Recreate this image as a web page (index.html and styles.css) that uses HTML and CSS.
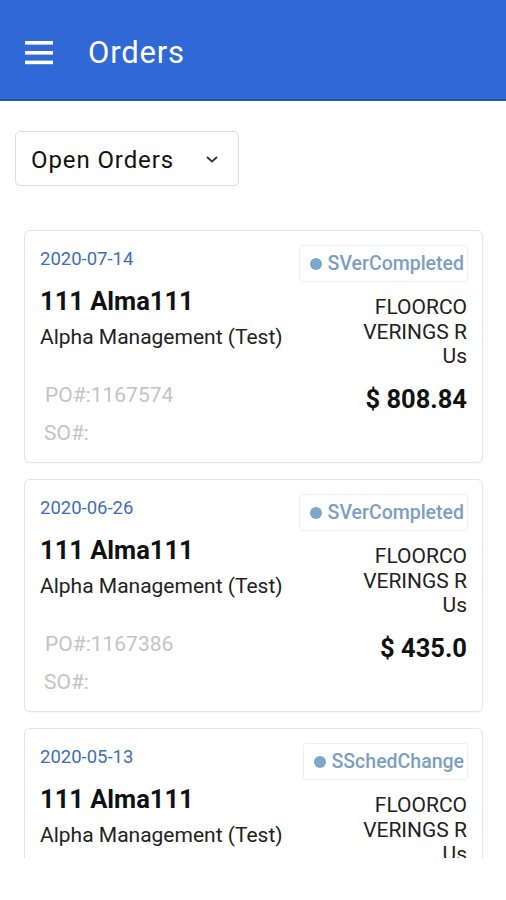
FILE: index.html
```html
<!DOCTYPE html>
<html lang="en">
<head>
  <meta charset="UTF-8" />
  <title>Orders</title>
  <meta name="viewport" content="width=device-width, initial-scale=1.0" />
  <link rel="stylesheet" href="styles.css">
</head>
<body>

  <div class="header">
    <svg class="menu-icon" width="28" height="24" viewBox="0 0 28 24">
      <rect x="0" y="0" width="28" height="3.6" fill="#fff" />
      <rect x="0" y="10" width="28" height="3.6" fill="#fff" />
      <rect x="0" y="19.6" width="28" height="3.6" fill="#fff" />
    </svg>
    <h1>Orders</h1>
  </div>

  <div class="filter">
    <div class="select-box">
      <span>Open Orders</span>
      <svg class="chevron" width="12" height="7" viewBox="0 0 12 7">
        <polyline points="1,1 6,5.5 11,1" fill="none" stroke="#333" stroke-width="1.8" />
      </svg>
    </div>
  </div>

  <!-- Orders list -->
  <div class="order-list">

    <div class="order-card">
      <div class="card-top">
        <span class="order-date">2020-07-14</span>
        <span class="status"><i class="dot"></i>SVerCompleted</span>
      </div>
      <div class="card-body">
        <div class="col-left">
          <div class="job-name">111 Alma111</div>
          <div class="client">Alpha Management (Test)</div>
          <div class="ref po">PO#:1167574</div>
          <div class="ref">SO#:</div>
        </div>
        <div class="col-right">
          <div class="vendor">FLOORCO<br>VERINGS R<br>Us</div>
          <div class="amount">$ 808.84</div>
        </div>
      </div>
    </div>

    <div class="order-card">
      <div class="card-top">
        <span class="order-date">2020-06-26</span>
        <span class="status"><i class="dot"></i>SVerCompleted</span>
      </div>
      <div class="card-body">
        <div class="col-left">
          <div class="job-name">111 Alma111</div>
          <div class="client">Alpha Management (Test)</div>
          <div class="ref po">PO#:1167386</div>
          <div class="ref">SO#:</div>
        </div>
        <div class="col-right">
          <div class="vendor">FLOORCO<br>VERINGS R<br>Us</div>
          <div class="amount">$ 435.0</div>
        </div>
      </div>
    </div>

    <div class="order-card">
      <div class="card-top">
        <span class="order-date">2020-05-13</span>
        <span class="status"><i class="dot"></i>SSchedChange</span>
      </div>
      <div class="card-body">
        <div class="col-left">
          <div class="job-name">111 Alma111</div>
          <div class="client">Alpha Management (Test)</div>
          <div class="ref po">PO#:1166120</div>
          <div class="ref">SO#:</div>
        </div>
        <div class="col-right">
          <div class="vendor">FLOORCO<br>VERINGS R<br>Us</div>
          <div class="amount">$ 120.0</div>
        </div>
      </div>
    </div>

  </div>

</body>
</html>
```

FILE: styles.css
```css
body {
  font-family: Roboto, "Noto Sans", sans-serif;
  background: #fff;
  margin: 0;
  padding: 0;
  color: #111;
}
.header {
  background: #3069d5;
  border-bottom: 2px solid #1f55b4;
  display: flex;
  align-items: center;
  padding: 6px 0 0 25px;
  box-sizing: border-box;
  height: 101px;
}
.header h1 {
  margin: 0 0 0 35px;
  color: #fff;
  font-size: 31px;
  font-weight: 400;
  letter-spacing: 0.8px;
}
.filter {
  padding: 30px 15px 0;
}
.select-box {
  width: 224px;
  height: 55px;
  box-sizing: border-box;
  border: 1px solid #dedede;
  border-radius: 5px;
  display: flex;
  align-items: center;
  justify-content: space-between;
  padding: 2px 20px 0 15px;
  font-size: 24px;
  letter-spacing: 0.9px;
  color: #111;
}
.chevron {
  margin-top: 0;
}
/* list of order cards */
.order-list {
  margin-top: 28px;
  height: 644px;
  overflow: hidden;
  padding: 16px 23px 0 24px;
  box-sizing: border-box;
}
.order-card {
  border: 1px solid #e4e4e4;
  border-radius: 6px;
  box-shadow: 0 1px 2px rgba(0,0,0,0.04);
  padding: 15px;
  margin-bottom: 16px;
  background: #fff;
}
.card-top {
  display: flex;
  justify-content: space-between;
  align-items: flex-start;
  height: 36px;
  margin-bottom: 2px;
}
.order-date {
  font-size: 18.5px;
  line-height: 26px;
  color: #3d6fb6;
}
.status {
  display: flex;
  align-items: center;
  height: 37px;
  margin-top: -1px;
  box-sizing: border-box;
  border: 1px solid #eeeff1;
  border-radius: 3px;
  padding: 0 3px 0 10px;
  font-size: 19.5px;
  font-weight: 500;
  color: #7d9fc2;
  margin-right: -1px;
}
.dot {
  width: 12px;
  height: 12px;
  border-radius: 50%;
  background: #7ea7cc;
  margin-right: 6px;
}
.card-body {
  display: flex;
  justify-content: space-between;
}
.job-name {
  font-size: 25.5px;
  font-weight: 700;
  line-height: 32px;
  margin-top: 1px;
}
.client {
  font-size: 21px;
  line-height: 28px;
  margin-top: 6px;
  color: #222;
}
.ref {
  font-size: 21px;
  line-height: 28px;
  color: #c4c4c4;
  padding-left: 4px;
  margin-top: 10px;
}
.ref.po {
  margin-top: 30px;
  padding-left: 5px;
}
.col-right {
  text-align: right;
  margin-top: 11px;
}
.vendor {
  font-size: 21px;
  line-height: 24.5px;
  color: #222;
}
.amount {
  font-size: 25.5px;
  font-weight: 700;
  line-height: 30px;
  margin-top: 15px;
}
```
